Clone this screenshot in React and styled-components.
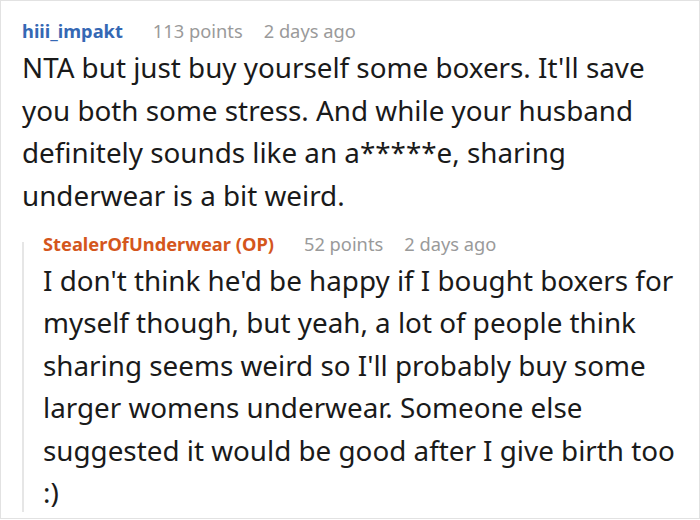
import React from "react";
import styled, { createGlobalStyle } from "styled-components";

const Global = createGlobalStyle`
  html, body { margin: 0; padding: 0; background: #fff; }
  body { font-family: "Noto Sans", "Open Sans", sans-serif; }
`;

const Frame = styled.div`
  box-sizing: border-box;
  width: 700px;
  height: 519px;
  border: 1px solid #e2e2e2;
  padding: 15px 10px 0 21px;
  overflow: hidden;
`;

const Comment = styled.div`
  display: flex;
  flex-direction: column;
`;

const Meta = styled.div`
  display: flex;
  align-items: baseline;
  font-size: 18.3px;
  line-height: 29px;
  white-space: nowrap;
`;

const Author = styled.span`
  font-weight: 700;
  color: ${(p) => (p.$op ? "#d4561c" : "#3568b4")};
  margin-right: 30px;
`;

const Info = styled.span`
  color: #9a9a9a;
  margin-right: 21px;
`;

const Body = styled.p`
  margin: 1.2px 0 0;
  font-size: 27.8px;
  line-height: 42.5px;
  color: #1a1a1a;
`;

const Reply = styled.div`
  position: relative;
  margin-top: 12.5px;
  padding-left: 21px;
  &::before {
    content: "";
    position: absolute;
    left: 0;
    top: 13.5px;
    bottom: 2px;
    width: 2px;
    background: #e6e6e6;
  }
`;

export default function App() {
  return (
    <>
      <Global />
      <Frame>
        <Comment>
          <Meta>
            <Author>hiii_impakt</Author>
            <Info>113 points</Info>
            <Info>2 days ago</Info>
          </Meta>
          <Body>
            NTA but just buy yourself some boxers. It'll save you both some
            stress. And while your husband definitely sounds like an a*****e,
            sharing underwear is a bit weird.
          </Body>
          <Reply>
            <Meta>
              <Author $op>StealerOfUnderwear (OP)</Author>
              <Info>52 points</Info>
              <Info>2 days ago</Info>
            </Meta>
            <Body>
              I don't think he'd be happy if I bought boxers for myself though,
              but yeah, a lot of people think sharing seems weird so I'll
              probably buy some larger womens underwear. Someone else suggested
              it would be good after I give birth too :)
            </Body>
          </Reply>
        </Comment>
      </Frame>
    </>
  );
}
